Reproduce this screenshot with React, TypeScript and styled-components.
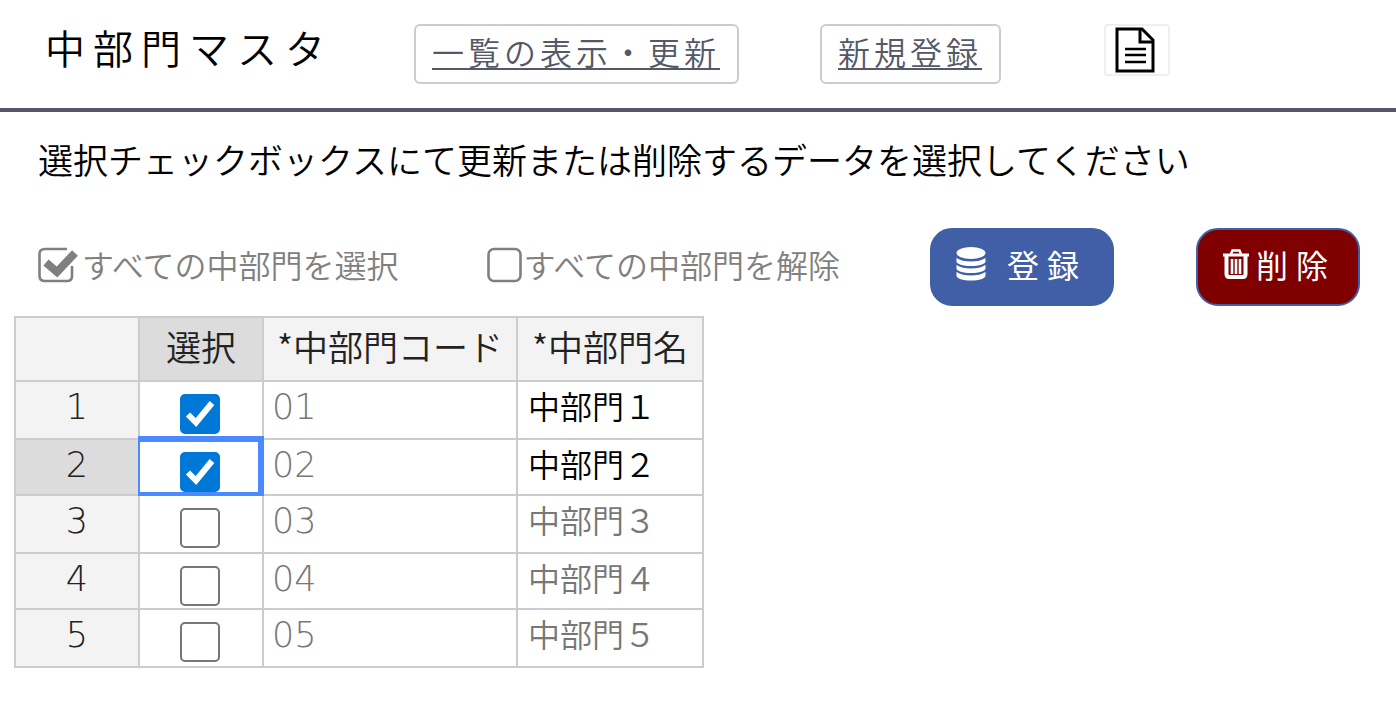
import React, { useState } from "react";
import styled, { createGlobalStyle, css } from "styled-components";

const GlobalStyle = createGlobalStyle`
  *, *::before, *::after { box-sizing: border-box; }
  body {
    margin: 0;
    background: #fff;
    color: #000;
    font-family: "Noto Sans CJK JP", sans-serif;
    font-weight: 350;
  }
`;

const Header = styled.header`
  display: flex;
  align-items: flex-start;
  height: 112px;
  padding: 24px 16px 0 45px;
  border-bottom: 4px solid #555867;
`;

const Title = styled.h1`
  width: 369px;
  margin: 0;
  font-size: 40px;
  line-height: 46px;
  font-weight: 350;
  letter-spacing: 8px;
  white-space: nowrap;
`;

const NavLink = styled.a<{ $gap: number }>`
  display: block;
  height: 60px;
  margin-right: ${(p) => p.$gap}px;
  padding: 0 17px 0 16px;
  border: 2px solid #ccc;
  border-radius: 6px;
  color: #555867;
  font-size: 32px;
  line-height: 50px;
  letter-spacing: 4px;
  text-underline-offset: 3px;
  text-decoration-thickness: 2px;
  text-decoration-skip-ink: none;
  white-space: nowrap;
`;

const DocButton = styled.button`
  display: flex;
  align-items: center;
  justify-content: center;
  width: 66px;
  height: 52px;
  padding: 0 4px 0 0;
  border: 2px solid #efefef;
  border-radius: 4px;
  background: #fff;
`;

const Message = styled.p`
  margin: 0;
  padding: 24px 38px 0;
  font-size: 35px;
  line-height: 46px;
`;

const Toolbar = styled.div`
  display: flex;
  align-items: center;
  margin-top: 46px;
  padding-left: 37px;
`;

const BulkOption = styled.label<{ $gap: number }>`
  display: flex;
  align-items: center;
  height: 78px;
  margin-right: ${(p) => p.$gap}px;
  padding-bottom: 6px;
  color: #808080;
  font-size: 32px;
  line-height: 40px;
  white-space: nowrap;
`;

const BulkBox = styled.span<{ $width: number }>`
  display: grid;
  width: ${(p) => p.$width}px;
  height: 40px;
  & > * { grid-area: 1 / 1; }
  & > input { width: 36px; height: 36px; margin: 0; opacity: 0; }
`;

const ActionButton = styled.button<{ $danger?: boolean }>`
  display: flex;
  align-items: center;
  width: ${(p) => (p.$danger ? 164 : 184)}px;
  height: 78px;
  gap: ${(p) => (p.$danger ? 6 : 20)}px;
  padding: 0 0 6px ${(p) => (p.$danger ? 24 : 23)}px;
  border: 2px solid #405fa6;
  border-radius: 22px;
  background: ${(p) => (p.$danger ? "#800000" : "#405fa6")};
  color: #fff;
  font-family: inherit;
  font-size: 32px;
  line-height: 40px;
  font-weight: 400;
  letter-spacing: 8px;
  white-space: nowrap;
  & + & { margin-left: 82px; }
`;

const Sheet = styled.table`
  width: 690px;
  margin: 10px 0 0 14px;
  border-collapse: collapse;
  table-layout: fixed;
`;

const Row = styled.tr`
  height: 58px;
  &:nth-child(even) { height: 56px; }
`;

const gridCell = css`
  padding: 0;
  border: 2px solid #ccc;
  vertical-align: top;
  white-space: nowrap;
`;

const HeadCell = styled.th<{ $active?: boolean }>`
  ${gridCell}
  height: 64px;
  background: ${(p) => (p.$active ? "#dcdcdc" : "#f3f3f3")};
  color: #222;
  font-size: 35px;
  line-height: 56px;
  font-weight: 350;
`;

const RowHead = styled(HeadCell)`
  height: auto;
  font-family: "DejaVu Sans", sans-serif;
  font-size: 35px;
  line-height: 50px;
  font-weight: 200;
`;

const Cell = styled.td<{ $strong?: boolean }>`
  ${gridCell}
  padding-left: 10px;
  color: ${(p) => (p.$strong ? "#000" : "#777")};
  font-size: 32px;
  line-height: 46px;
`;

const CodeCell = styled(Cell)`
  padding-left: 8px;
  font-family: "DejaVu Sans", sans-serif;
  font-size: 35px;
  line-height: 50px;
  font-weight: 200;
`;

const CheckCell = styled.td<{ $selected?: boolean }>`
  ${gridCell}
  position: relative;
  padding: 12px 0 0 40px;
  line-height: 0;
  ${(p) =>
    p.$selected &&
    css`
      &::after {
        content: "";
        position: absolute;
        inset: -4px -2px -2px -2px;
        border: solid #4b89ff;
        border-width: 6px 6px 4px 2px;
        pointer-events: none;
      }
    `}
`;

const CheckWrap = styled.span`
  display: grid;
  width: 40px;
  height: 40px;
  & > * { grid-area: 1 / 1; }
  & > svg { pointer-events: none; }
`;

const Check = styled.input`
  appearance: none;
  width: 40px;
  height: 40px;
  margin: 0;
  border: 2px solid #767676;
  border-radius: 5px;
  background: #fff;
  &:checked { border-color: #0078d7; background: #0078d7; }
`;

const DocIcon = () => (
  <svg width="40" height="46" viewBox="0 0 40 46" fill="none" stroke="#000" strokeWidth="3">
    <path d="M2 2H27L38 13V44H2Z" />
    <path d="M25 2V15H38" />
    <path d="M10 22H31M10 28H31M10 35H31" strokeWidth="2.5" />
  </svg>
);

const BoxIcon = ({ checked }: { checked: boolean }) => (
  <svg width="42" height="40" viewBox="0 0 42 40" fill="none" stroke="#808080">
    {checked ? (
      <>
        <path
          d="M30 5H8Q2.500 5 2.500 10V32Q2.500 37 8 37H30Q35 37 35 32V22"
          strokeWidth="2.600"
        />
        <path d="M9 18.500L20 28L38 9" strokeWidth="8" />
      </>
    ) : (
      <rect x="2.500" y="5" width="32" height="32" rx="5.500" strokeWidth="2.600" />
    )}
  </svg>
);

const DatabaseIcon = () => (
  <svg width="32" height="36" viewBox="0 0 32 36" fill="#fff">
    <ellipse cx="16" cy="7" rx="14.500" ry="6" />
    <path d="M1.500 12Q7 15.500 16 15.500T30.500 12V15.500C30.500 18 24 20 16 20S1.500 18 1.500 15.500Z" />
    <path d="M1.500 19Q7 22.500 16 22.500T30.500 19V22.500C30.500 25 24 27 16 27S1.500 25 1.500 22.500Z" />
    <path d="M1.500 26Q7 29.500 16 29.500T30.500 26V29.500C30.500 32.500 24 34.500 16 34.500S1.500 32.500 1.500 29.500Z" />
  </svg>
);

const TrashIcon = () => (
  <svg width="28" height="32" viewBox="0 0 28 32" fill="none" stroke="#fff">
    <path d="M1 7H27" strokeWidth="3" />
    <path d="M9 6L10.500 2.500H17.500L19 6" strokeWidth="2.500" />
    <path d="M4.500 8V26Q4.500 29 7 29H21Q23.500 29 23.500 26V8" strokeWidth="4" />
    <path d="M10 11V26M14 11V26M18 11V26" strokeWidth="2.600" />
  </svg>
);

const TickIcon = () => (
  <svg width="40" height="40" viewBox="0 0 40 40" fill="none" stroke="#fff">
    <path d="M8 20.500L16 28.500L32 9" strokeWidth="6" />
  </svg>
);

const names = ["中部門１", "中部門２", "中部門３", "中部門４", "中部門５"];

export default function App() {
  const [checked, setChecked] = useState([true, true, false, false, false]);
  const [bulk, setBulk] = useState("select");

  const chooseBulk = (mode: string) => {
    setBulk(mode);
    setChecked(names.map(() => mode === "select"));
  };
  const toggle = (index: number) =>
    setChecked(checked.map((value, i) => (i === index ? !value : value)));

  return (
    <>
      <GlobalStyle />
      <Header>
        <Title>中部門マスタ</Title>
        <NavLink href="#list" $gap={81}>一覧の表示・更新</NavLink>
        <NavLink href="#new" $gap={103}>新規登録</NavLink>
        <DocButton type="button" aria-label="文書">
          <DocIcon />
        </DocButton>
      </Header>
      <main>
        <Message>選択チェックボックスにて更新または削除するデータを選択してください</Message>
        <Toolbar>
          <BulkOption $gap={88}>
            <BulkBox $width={45}>
              <input type="checkbox" checked={bulk === "select"} onChange={() => chooseBulk("select")} />
              <BoxIcon checked={bulk === "select"} />
            </BulkBox>
            すべての中部門を選択
          </BulkOption>
          <BulkOption $gap={90}>
            <BulkBox $width={37}>
              <input type="checkbox" checked={bulk === "clear"} onChange={() => chooseBulk("clear")} />
              <BoxIcon checked={bulk === "clear"} />
            </BulkBox>
            すべての中部門を解除
          </BulkOption>
          <ActionButton type="button">
            <DatabaseIcon />
            登録
          </ActionButton>
          <ActionButton type="button" $danger>
            <TrashIcon />
            削除
          </ActionButton>
        </Toolbar>
        <Sheet>
          <colgroup>
            <col width="124" />
            <col width="124" />
            <col width="254" />
            <col width="186" />
          </colgroup>
          <thead>
            <tr>
              <HeadCell />
              <HeadCell scope="col" $active>選択</HeadCell>
              <HeadCell scope="col">*中部門コード</HeadCell>
              <HeadCell scope="col">*中部門名</HeadCell>
            </tr>
          </thead>
          <tbody>
            {names.map((name, i) => (
              <Row key={name}>
                <RowHead scope="row" $active={i === 1}>{i + 1}</RowHead>
                <CheckCell $selected={i === 1}>
                  <CheckWrap>
                    <Check
                      type="checkbox"
                      aria-label={name}
                      checked={checked[i]}
                      onChange={() => toggle(i)}
                    />
                    {checked[i] && <TickIcon />}
                  </CheckWrap>
                </CheckCell>
                <CodeCell>{`0${i + 1}`}</CodeCell>
                <Cell $strong={checked[i]}>{name}</Cell>
              </Row>
            ))}
          </tbody>
        </Sheet>
      </main>
    </>
  );
}
